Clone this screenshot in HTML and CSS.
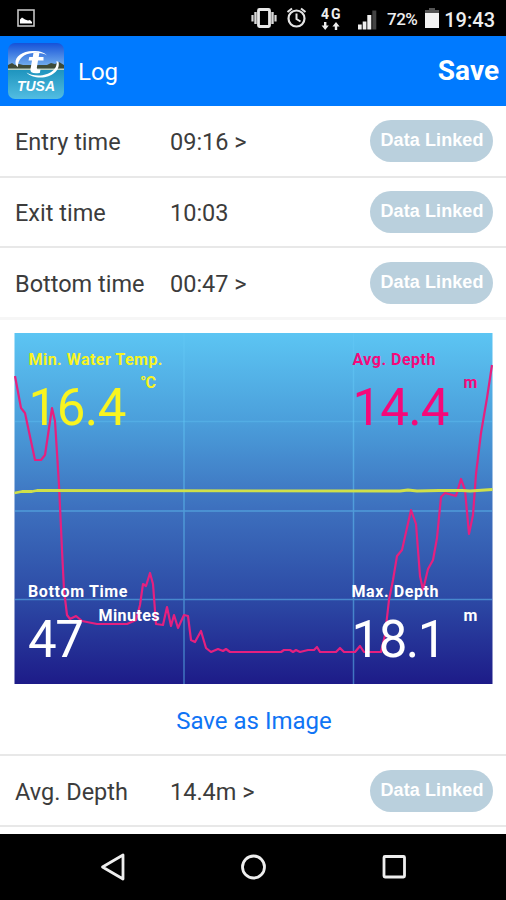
FILE: index.html
```html
<!DOCTYPE html>
<html lang="en">
	<head>
		<meta charset="utf-8" />
		<title>Log</title>
		<link rel="stylesheet" href="styles.css">
	</head>
	<body>
		<div class="statusbar">
			<svg class="notification" width="18" height="18" viewBox="0 0 18 18">
				<rect x="1" y="1" width="16" height="16" fill="none" stroke="#c4c4c4" stroke-width="1.6"/>
				<path d="M3 14.500V10.500l2-2 3 2 3 1 2-.5 2 2v1.500z" fill="#fff"/>
			</svg>
			<svg class="icons" width="130" height="36" viewBox="250 0 130 36">
				<rect x="258.500" y="9.500" width="11" height="17" rx="1" fill="none" stroke="#e8e8e8" stroke-width="2.800"/>
				<path d="M255.500 12v12M272.500 12v12" stroke="#d8d8d8" stroke-width="2.400"/>
				<path d="M252.500 15v6.500M275.500 15v6.500" stroke="#d8d8d8" stroke-width="2.200"/>
				<circle cx="296.500" cy="18.500" r="8" fill="none" stroke="#e4e4e4" stroke-width="2.200"/>
				<path d="M296.500 13.500v5.500l4 2.500M287.500 12l4.500-3.500M305.500 12l-4.500-3.500" fill="none" stroke="#e4e4e4" stroke-width="2"/>
				<text class="net" x="321" y="18.500" textLength="19.500">4G</text>
				<path d="M324 22h2.400v3.500h2.400L325.200 30l-3.600-4.500h2.400zM334.800 30h2.400v-3.500h2.400L336 22l-3.600 4.500h2.400z" fill="#eee"/>
				<path d="M358 24.500h3.700v5H358zM362.700 21.500h3.700v8h-3.700zM367.300 15h4v14.500h-4z" fill="#f0f0f0"/>
				<path d="M372.300 10.500h4v19h-4z" fill="#444"/>
			</svg>
			<span class="percent">72%</span>
			<svg class="battery" width="14" height="20" viewBox="0 0 14 20">
				<path d="M4 0h6v2h4v4H0V2h4z" fill="#555"/>
				<path d="M0 5h14v15H0z" fill="#f2f2f2"/>
			</svg>
			<span class="clock">19:43</span>
		</div>

		<header class="header">
			<svg class="logo" width="56" height="56" viewBox="0 0 56 56">
				<defs>
					<linearGradient id="sky" x1="0" y1="0" x2="0" y2="1">
						<stop offset="0" stop-color="#1552d8"/>
						<stop offset="1" stop-color="#86c2f2"/>
					</linearGradient>
					<linearGradient id="sea" x1="0" y1="0" x2="0" y2="1">
						<stop offset="0" stop-color="#1d93bd"/>
						<stop offset="1" stop-color="#52bde2"/>
					</linearGradient>
					<clipPath id="corner"><rect width="56" height="56" rx="7"/></clipPath>
				</defs>
				<g clip-path="url(#corner)">
					<rect width="56" height="28" fill="url(#sky)"/>
					<rect y="26" width="56" height="30" fill="url(#sea)"/>
					<path d="M0 22l4-2 3 2 4-1 4 1h24l4-2 4 1 4-2 5 3v4H0z" fill="#3e4b38"/>
					<path d="M0 25.500h56v1.500H0z" fill="#b9cfc4"/>
				</g>
				<path d="M25 8C14 8 7 14 7.500 20c.2 2 1 3 2.500 4C9.500 16 16 10.500 25 10c6-.5 11 .5 14 2.500C36 9 31 7.500 25 8z" fill="#fff"/>
				<path d="M48.500 18c1.500 8-7 14.500-18 14.500-5 0-9-1-12-3 3 3.500 8 5 14 5C44 34.500 52.500 27 50.500 19z" fill="#fff"/>
				<path d="M25.500 9.500h6l-.8 4.500h4.800v3.500h-5.500l-1.200 7.500q-.3 2 3.700 1.500l-.7 3.500q-10.300 1.500-9.300-4l1.500-8.500h-3.500l.8-3.500h3.500z" fill="#fff"/>
				<text class="brand" x="9" y="48" textLength="38" lengthAdjust="spacingAndGlyphs">TUSA</text>
			</svg>
			<h1 class="title">Log</h1>
			<a class="save">Save</a>
		</header>

		<div class="row">
			<span class="label">Entry time</span>
			<span class="value">09:16 &gt;</span>
			<span class="linked">Data Linked</span>
		</div>
		<div class="row exit">
			<span class="label">Exit time</span>
			<span class="value">10:03</span>
			<span class="linked">Data Linked</span>
		</div>
		<div class="row last">
			<span class="label">Bottom time</span>
			<span class="value">00:47 &gt;</span>
			<span class="linked">Data Linked</span>
		</div>

		<div class="graph">
			<svg class="chart" width="479" height="351" viewBox="14 333 479 351">
				<defs>
					<linearGradient id="water" x1="0" y1="0" x2="0" y2="1">
						<stop offset="0" stop-color="#5cc5f3"/>
						<stop offset=".25" stop-color="#4b9fdb"/>
						<stop offset=".5" stop-color="#3d70be"/>
						<stop offset=".75" stop-color="#2d4ba6"/>
						<stop offset="1" stop-color="#1d1b88"/>
					</linearGradient>
				</defs>
				<rect x="14.500" y="333" width="478" height="351" fill="url(#water)"/>
				<!-- grid -->
				<path class="grid faint" d="M15 421.500h477"/>
				<path class="grid" d="M15 511h477M15 599.500h477M184 333v351M353.500 333v351"/>
				<!-- depth -->
				<polyline class="depth" points="15,376 21,408 25,413 35,460 41,460 45,455 52,408 55,421 59,485 62,550 64,590 67,615 70,619 76,616 82,621 97,624 127,624 136,620 140,605 143,584 146,586 150,573 153,584 156,624 163,625 167,607 171,626 174,615 178,628 184,615 188,616 191,640 195,642 201,631 206,648 211,652 218,649 223,651 226,649 230,652 281,652 284,650 290,650 293,652 296,650 300,652 308,650 314,650 317,647 320,652 336,652 340,648 344,652 355,652 360,646 364,652 381,652 385,635 389,600 393,580 397,556 402,550 411,510 416,524 420,576 423,590 428,569 433,560 437,538 441,497 445,493 456,496 461,479 465,490 469,534 473,515 476,474 481,433 487,398 492,365"/>
				<!-- water temperature -->
				<polyline class="temp" points="14.500,493 22,491.500 32,491.500 37,490.500 400,491 408,490 417,491 439,490.500 462,490.500 470,491 492.500,489.500"/>

				<text class="name yellow" x="28.500" y="365" textLength="134">Min. Water Temp.</text>
				<text class="unit yellow" x="140" y="387.500" textLength="16">°C</text>
				<text class="number yellow" x="28.500" y="424.500" textLength="98">16.4</text>

				<text class="name pink" x="352.500" y="365" textLength="83">Avg. Depth</text>
				<text class="unit pink" x="463.500" y="388">m</text>
				<text class="number pink" x="352.500" y="424.500" textLength="97">14.4</text>

				<text class="name" x="28" y="597" textLength="99.500">Bottom Time</text>
				<text class="unit" x="98.500" y="620.500" textLength="61">Minutes</text>
				<text class="number" x="28" y="656.500" textLength="56">47</text>

				<text class="name" x="351.500" y="597" textLength="87">Max. Depth</text>
				<text class="unit" x="463.500" y="620.500">m</text>
				<text class="number" x="351.500" y="656.500" textLength="95">18.1</text>
			</svg>
		</div>

		<a class="saveimage">Save as Image</a>

		<div class="row average">
			<span class="label">Avg. Depth</span>
			<span class="value">14.4m &gt;</span>
			<span class="linked">Data Linked</span>
		</div>

		<footer class="navbar">
			<svg width="506" height="66" viewBox="0 834 506 66" fill="none" stroke="#eee" stroke-width="2.800">
				<path d="M102.500 867l20.500-12v24z" stroke-linejoin="round"/>
				<circle cx="253.500" cy="867" r="11"/>
				<rect x="384" y="856.500" width="20.500" height="20.500" rx="1"/>
			</svg>
		</footer>
	</body>
</html>
```
FILE: styles.css
```css
body {
	margin: 0;
	height: 900px;
	display: flex;
	flex-direction: column;
	overflow: hidden;
	background: #fff;
	color: #3c3c3c;
	font-family: Roboto, "Liberation Sans", sans-serif;
}
svg {
	display: block;
	flex: none;
}
.statusbar {
	height: 36px;
	box-sizing: border-box;
	padding: 0 11px 0 17px;
	display: flex;
	align-items: center;
	background: #000;
	color: #eee;
}
.icons {
	margin-left: 215px;
}
.net {
	font-size: 14px;
	font-weight: bold;
	fill: #eee;
}
.percent {
	width: 31px;
	margin: 2px 0 0 7px;
	font-size: 17px;
	font-weight: 500;
	letter-spacing: -0.5px;
}
.battery {
	margin-left: 7px;
}
.clock {
	margin: 3px 0 0 auto;
	font-size: 20px;
	font-weight: 500;
}
.header {
	height: 70px;
	box-sizing: border-box;
	padding: 0 7px 0 8px;
	display: flex;
	align-items: center;
	background: #007aff;
	color: #fff;
}
.brand {
	font-family: "Liberation Sans", sans-serif;
	font-size: 15px;
	font-weight: bold;
	font-style: italic;
	fill: #fff;
}
.title {
	margin: 2px 0 0 14px;
	font-size: 24px;
	font-weight: normal;
}
.save {
	margin: 0 0 1px auto;
	font-size: 28px;
	font-weight: bold;
}
.row {
	height: 71px;
	box-sizing: border-box;
	padding: 0 13px 0 15px;
	display: flex;
	align-items: center;
	border-bottom: 2px solid #e8e8e8;
	font-size: 23.5px;
}
.header + .row {
	height: 72px;
}
.exit {
	height: 70px;
}
.last {
	height: 72px;
	border-bottom: 3px solid #f6f6f6;
}
.label {
	width: 155px;
	padding-top: 2px;
}
.value {
	padding-top: 2px;
}
.linked {
	width: 123px;
	height: 42px;
	box-sizing: border-box;
	padding-left: 1px;
	margin-left: auto;
	border-radius: 21px;
	background: #bad0dd;
	color: #fff;
	font-family: "Liberation Sans", Arial, sans-serif;
	font-size: 18px;
	font-weight: bold;
	letter-spacing: 0.1px;
	line-height: 41px;
	text-align: center;
}
.graph {
	padding: 13px 13px 0 14px;
}
.grid {
	stroke: #63c8f5;
	stroke-opacity: .5;
	stroke-width: 1.5;
}
.faint {
	stroke-opacity: .35;
}
.depth, .temp {
	fill: none;
	stroke-linejoin: round;
	stroke: #e5207f;
	stroke-width: 2.2;
}
.temp {
	stroke: #cfe04a;
	stroke-width: 2.8;
}
.name, .unit, .number {
	fill: #fff;
	font-size: 16px;
	font-weight: bold;
}
.number {
	font-size: 51px;
	font-weight: normal;
}
.yellow {
	fill: #f8f420;
}
.pink {
	fill: #f5087a;
}
.saveimage {
	height: 72px;
	box-sizing: border-box;
	padding: 2px 0 0 2px;
	border-bottom: 2px solid #e8e8e8;
	color: #0f74f5;
	font-size: 24px;
	line-height: 71px;
	text-align: center;
}
.navbar {
	height: 66px;
	margin-top: auto;
	background: #000;
}
```
